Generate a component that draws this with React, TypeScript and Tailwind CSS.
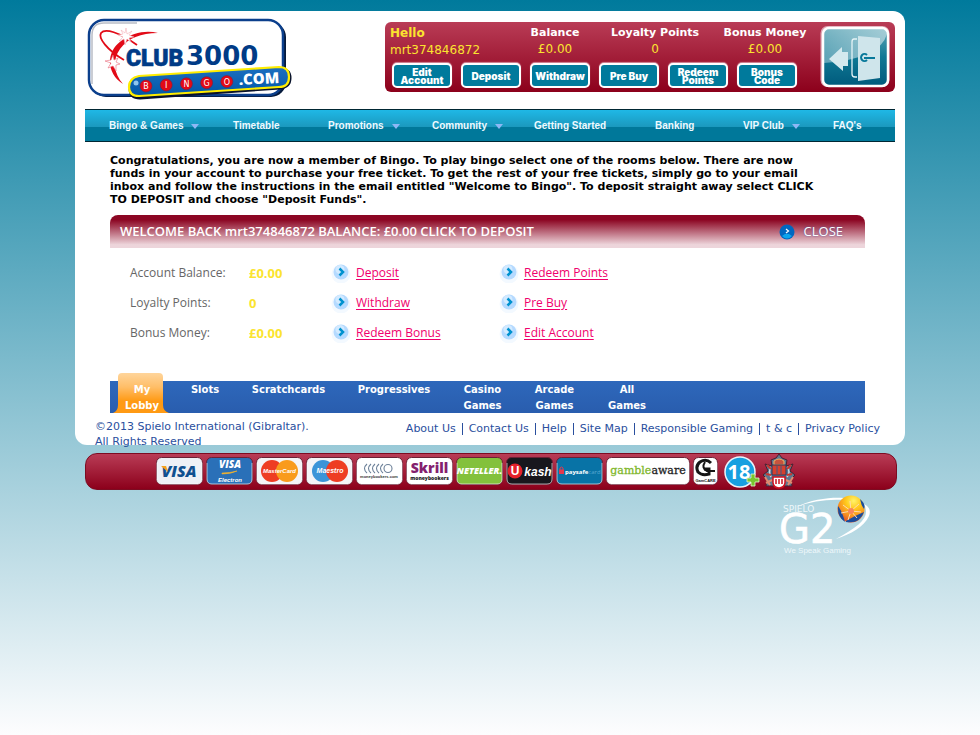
import React from "react";

const accountButtons = ["Edit Account", "Deposit", "Withdraw", "Pre Buy", "Redeem Points", "Bonus Code"];

const menu = [
  { label: "Bingo & Games", sub: true },
  { label: "Timetable", sub: false },
  { label: "Promotions", sub: true },
  { label: "Community", sub: true },
  { label: "Getting Started", sub: false },
  { label: "Banking", sub: false },
  { label: "VIP Club", sub: true },
  { label: "FAQ's", sub: false },
];

const summary = [
  { label: "Account Balance:", value: "£0.00", left: "Deposit", right: "Redeem Points" },
  { label: "Loyalty Points:", value: "0", left: "Withdraw", right: "Pre Buy" },
  { label: "Bonus Money:", value: "£0.00", left: "Redeem Bonus", right: "Edit Account" },
];

const tabs = [
  ["My", "Lobby"],
  ["Slots"],
  ["Scratchcards"],
  ["Progressives"],
  ["Casino", "Games"],
  ["Arcade", "Games"],
  ["All", "Games"],
];

const footerLinks = ["About Us", "Contact Us", "Help", "Site Map", "Responsible Gaming", "t & c", "Privacy Policy"];

function ClubLogo() {
  return (
    <svg width="206" height="84" viewBox="0 0 206 84" role="img" aria-label="Club 3000 Bingo.com">
      <defs>
        <linearGradient id="plate" x1="0" y1="0" x2="0" y2="1">
          <stop offset="0" stopColor="#1c6fc0" />
          <stop offset="1" stopColor="#0057a8" />
        </linearGradient>
      </defs>
      <rect x="4" y="4" width="195" height="75" rx="15" fill="#061a3c" />
      <rect x="2" y="2" width="194" height="75" rx="15" fill="#fff" stroke="#0b3f8c" strokeWidth="2.5" />
      <path d="M5 66V17Q5 5 17 5H50" fill="none" stroke="#b9bdc6" strokeWidth="1.5" />
      <path d="M36 66C19 55 19 34 34 23C46 14 60 12 71 15C54 15 41 20 33 31C25 42 27 56 36 66Z" fill="#e20a17" />
      <path d="M37 42C20 32 11 20 14 15C18 10 32 14 50 27" fill="none" stroke="#e20a17" strokeWidth="1.8" />
      <path d="M39 10L40 16L45 13L42 17L47 19L42 20L44 24L40 21L38 27L37 21L32 23L36 19L31 17L36 16L34 12L38 15Z" fill="#fff" stroke="#f3a5ae" strokeWidth=".5" />
      <path d="M26 37L27 42L31 40L29 44L33 46L29 47L29 53L26 48L21 50L24 45L18 43L24 42Z" fill="#fff" stroke="#e9697a" strokeWidth=".6" />
      <text x="39" y="48" fontFamily="Roboto,sans-serif" fontSize="23" fontWeight="900" fill="#003b86" stroke="#003b86" strokeWidth=".6">CLUB</text>
      <text x="99" y="47" fontFamily="'DejaVu Sans',sans-serif" fontSize="26" fontWeight="700" fill="#003b86">3000</text>
      <path d="M52 60L193 51Q203 51 203 60T193 70L53 80Q43 80 43 70T52 60Z" fill="#08122c" stroke="#08122c" strokeWidth="3" />
      <path d="M52 58L192 49Q202 49 202 59T192 69L52 78Q42 78 42 69T52 58Z" fill="url(#plate)" stroke="#ffed00" strokeWidth="2.2" />
      <circle cx="49" cy="65" r="2.500" fill="#8ec5ee" />
      {["B", "I", "N", "G", "O"].map((c, i) => (
        <g key={c}>
          <circle cx={59 + i * 20.2} cy={68 - i * 1.1} r="6" fill="#e20a17" stroke="#7d1c3b" strokeWidth=".6" />
          <text x={59 + i * 20.2} y={71 - i * 1.1} textAnchor="middle" fontFamily="'DejaVu Sans',sans-serif" fontSize="8" fill="#fff">{c}</text>
        </g>
      ))}
      <text x="152" y="67" transform="rotate(-3 152 67)" fontFamily="'Open Sans',sans-serif" fontSize="15" fontWeight="800" fill="#fff">.COM</text>
    </svg>
  );
}

function DoorIcon() {
  return (
    <svg width="70" height="64" viewBox="0 0 70 64" aria-hidden="true">
      <defs>
        <linearGradient id="door" x1="0" y1="0" x2="0" y2="1">
          <stop offset="0" stopColor="#5ba5b6" />
          <stop offset=".5" stopColor="#0f7894" />
          <stop offset="1" stopColor="#005a7c" />
        </linearGradient>
        <linearGradient id="shine" x1="0" y1="0" x2="1" y2=".6">
          <stop offset="0" stopColor="#fff" stopOpacity=".2" />
          <stop offset="1" stopColor="#fff" stopOpacity=".55" />
        </linearGradient>
      </defs>
      <rect x=".5" y="1" width="69" height="61" rx="7" fill="#dfa4b2" />
      <rect x="3" y="3" width="65" height="58" rx="6" fill="url(#door)" stroke="#fff" strokeWidth="2.5" />
      <path d="M4 38V9Q4 4 9 4H62Q67 4 67 9Q60 34 4 38Z" fill="url(#shine)" />
      <path d="M9 34L22 22V27H28V41H23V46Z" fill="#d4e9ee" />
      <path d="M37 14H34Q32 14 32 17V49Q32 52 35 52H37" fill="none" stroke="#e5f3f6" strokeWidth="1.3" />
      <path d="M38 11L60 13V53L38 56Z" fill="#cfe5eb" />
      <path d="M47 30A3.500 3.500 0 1 0 47 35" fill="none" stroke="#08789a" strokeWidth="2" />
      <path d="M44 33H55" stroke="#08789a" strokeWidth="2" />
    </svg>
  );
}

function ArrowBullet() {
  return (
    <svg width="20" height="20" viewBox="0 0 20 20" aria-hidden="true" className="shrink-0">
      <circle cx="10" cy="11" r="9.5" fill="#f3f9ff" />
      <circle cx="10" cy="9" r="7.5" fill="#b5daff" />
      <circle cx="9" cy="6.500" r="4.500" fill="#d3eaff" />
      <path d="M8.500 5.500L12 9L8.500 12.500" fill="none" stroke="#0092cf" strokeWidth="2.500" />
    </svg>
  );
}

function CloseBullet() {
  return (
    <svg width="16" height="16" viewBox="0 0 16 16" aria-hidden="true">
      <circle cx="8" cy="8" r="7.500" fill="#0067c0" />
      <path d="M3 12Q8 17 13 12L10 10H6Z" fill="#0aa5ee" />
      <path d="M7 5L9.500 7L7 9" fill="none" stroke="#fff" strokeWidth="1.200" />
    </svg>
  );
}

function LobbyTab() {
  return (
    <svg width="56" height="40" viewBox="0 0 56 40" aria-hidden="true" className="absolute bottom-px left-[3px]">
      <defs>
        <linearGradient id="tab" x1="0" y1="0" x2="0" y2="1">
          <stop offset="0" stopColor="#ffd59b" />
          <stop offset=".35" stopColor="#ffbe68" />
          <stop offset=".7" stopColor="#ff9a14" />
          <stop offset="1" stopColor="#ff9a14" />
        </linearGradient>
      </defs>
      <path d="M0 40Q5 38 5 32V4Q5 0 9 0H46Q50 0 50 4V32Q50 38 56 40Z" fill="url(#tab)" />
    </svg>
  );
}

function Card({ name, width = 47, fill = "#fff", children }: { name: string; width?: number; fill?: string; children: React.ReactNode }) {
  return (
    <svg width={width} height="28" viewBox={`0 0 ${width} 28`} role="img" aria-label={name}>
      <rect x=".5" y=".5" width={width - 1} height="27" rx="5" fill={fill} stroke="#6c2035" strokeWidth="1" />
      <path d={`M1 6V22Q1 27 6 27H${width - 6}Q${width - 1} 27 ${width - 1} 22V6`} fill="none" stroke="#fff" strokeOpacity=".6" />
      {children}
    </svg>
  );
}

function PaymentCards() {
  const sans = "'Liberation Sans',sans-serif";
  const open = "'Open Sans',sans-serif";
  return (
    <div className="flex items-center gap-[3px] pb-[2px]">
      <Card name="Visa" fill="#eef1f6">
        <text x="23" y="20" textAnchor="middle" fontFamily={open} fontSize="16" fontWeight="800" fontStyle="italic" fill="#10508f">VISA</text>
        <path d="M5 9H10L12 15Z" fill="#f6a11b" />
      </Card>
      <Card name="Visa Electron" fill="#2a70b8">
        <text x="24" y="11" textAnchor="middle" fontFamily={open} fontSize="10" fontWeight="800" fontStyle="italic" fill="#fff">VISA</text>
        <path d="M16 16Q24 16 31 14Q25 17 16 17Z" fill="#f6b42b" stroke="#f6b42b" strokeWidth=".6" />
        <text x="24" y="25" textAnchor="middle" fontFamily={sans} fontSize="6" fontWeight="700" fontStyle="italic" fill="#fff">Electron</text>
      </Card>
      <Card name="MasterCard" fill="#f4f4f7">
        <circle cx="16" cy="14" r="11" fill="#ee3d23" />
        <circle cx="31" cy="14" r="11" fill="#f99b1c" />
        <text x="23.500" y="16" textAnchor="middle" fontFamily={sans} fontSize="6" fontWeight="700" fontStyle="italic" fill="#fff">MasterCard</text>
      </Card>
      <Card name="Maestro" fill="#f4f4f7">
        <circle cx="17" cy="14" r="11" fill="#3b94d8" />
        <circle cx="31" cy="14" r="11" fill="#ee3d23" />
        <text x="24" y="16" textAnchor="middle" fontFamily={sans} fontSize="7" fontWeight="700" fontStyle="italic" fill="#fff">Maestro</text>
      </Card>
      <Card name="Moneybookers">
        {[8, 12, 16, 20, 24].map((x) => (
          <path key={x} d={`M${x + 3} 7Q${x - 2} 11.500 ${x + 3} 16`} fill="none" stroke="#6d8199" strokeWidth="1.100" />
        ))}
        <circle cx="32" cy="11.500" r="4" fill="#fff" stroke="#6d8199" strokeWidth="1.100" />
        <text x="23" y="21" textAnchor="middle" fontFamily={sans} fontSize="4" fontWeight="700" fill="#333">moneybookers.com</text>
      </Card>
      <Card name="Skrill Moneybookers">
        <text x="23.500" y="16" textAnchor="middle" fontFamily={open} fontSize="14" fontWeight="800" fill="#84206e">Skrill</text>
        <text x="23.500" y="23" textAnchor="middle" fontFamily={open} fontSize="5" fontWeight="800" fill="#222">moneybookers</text>
      </Card>
      <Card name="Neteller" fill="#83c13c">
        <text x="23.500" y="17" textAnchor="middle" fontFamily={open} fontSize="9" fontWeight="800" fontStyle="italic" fill="#fff">NETELLER.</text>
      </Card>
      <Card name="Ukash" fill="#18171d">
        <circle cx="9" cy="14" r="7.500" fill="#e3212b" />
        <text x="9" y="18" textAnchor="middle" fontFamily={sans} fontSize="12" fontWeight="700" fill="#fff">U</text>
        <text x="32" y="19" textAnchor="middle" fontFamily={sans} fontSize="12" fontWeight="700" fontStyle="italic" fill="#fff">kash</text>
      </Card>
      <Card name="Paysafecard" fill="#0873a6">
        <path d="M4 13V11Q5.500 9 7 11V13" fill="none" stroke="#e5384d" />
        <rect x="3" y="12.500" width="5" height="4.500" fill="#e5384d" />
        <text x="9" y="17" fontFamily={open} fontSize="6" fontWeight="700" fill="#fff">paysafe<tspan fill="#59a8d0" fontWeight="400">card</tspan></text>
      </Card>
      <Card name="GambleAware" width={84}>
        <text x="42" y="17" textAnchor="middle" fontFamily="'DejaVu Serif',serif" fontSize="11" fill="#7fb72c" stroke="#7fb72c" strokeWidth=".3">gamble<tspan fill="#222" stroke="#222">aware</tspan></text>
      </Card>
      <Card name="GamCare" width={25}>
        <path d="M18 6Q13 1 7 5Q2 9 5 15Q9 19 16 17V12H11" fill="none" stroke="#161616" strokeWidth="3" />
        <path d="M12 5Q8 11 14 14H22" fill="none" stroke="#161616" strokeWidth="2" />
        <text x="12.500" y="25" textAnchor="middle" fontFamily={sans} fontSize="4" fontWeight="700" fill="#111">GamCARE</text>
      </Card>
      <svg width="38" height="34" viewBox="0 0 38 34" role="img" aria-label="18+" className="ml-[2px]">
        <circle cx="17" cy="18" r="15" fill="#179fe0" stroke="#e9f6fc" strokeWidth="1.500" />
        <text x="16" y="25" textAnchor="middle" fontFamily={open} fontSize="20" fontWeight="700" fill="#fff">18</text>
        <path d="M28 20H32V24H36V28H32V32H28V28H24V24H28Z" fill="#78c52d" stroke="#e5f5d6" strokeWidth=".8" />
      </svg>
      <svg width="34" height="36" viewBox="0 0 34 36" role="img" aria-label="Government of Gibraltar crest" className="-ml-[2px]">
        <path d="M17 1L20 5L25 7L24 13L31 11L28 18L33 22L29 26L30 33H4L5 26L1 22L6 18L3 11L10 13L9 7L14 5Z" fill="#5d7890" stroke="#4a2030" strokeWidth="1" />
        <path d="M12 8Q17 4 22 8V12H12Z" fill="#c6533e" stroke="#f0b260" />
        <path d="M9 14Q6 19 9 24M25 14Q29 19 25 24" fill="none" stroke="#c9d9e2" strokeWidth="1.500" />
        <path d="M5 12L9 16M29 12L25 16M4 21L9 22M30 21L25 22" stroke="#c8372f" strokeWidth="2" />
        <path d="M10 12H24V22H10Z" fill="#d5402f" stroke="#293b60" />
        <path d="M15 13V21M19 13V21" stroke="#3c5b88" />
        <path d="M3 24L8 32M31 24L26 32M4 30L10 27M30 30L24 27" stroke="#e08a70" strokeWidth="2" />
        <path d="M11 24H23V30Q22 35 17 35Q12 35 11 30Z" fill="#fff" stroke="#cf111f" strokeWidth="1.500" />
        <path d="M14 26V31M17 26V31M20 26V31" stroke="#cf111f" strokeWidth="1.500" />
      </svg>
    </div>
  );
}

function SpieloLogo() {
  return (
    <svg width="94" height="62" viewBox="0 0 94 62" role="img" aria-label="Spielo G2 We Speak Gaming">
      <defs>
        <radialGradient id="ball" cx=".6" cy=".2" r=".85">
          <stop offset="0" stopColor="#fff36b" />
          <stop offset=".35" stopColor="#ffc81b" />
          <stop offset=".7" stopColor="#f58a22" />
          <stop offset="1" stopColor="#d9452a" />
        </radialGradient>
      </defs>
      <path d="M16 13C32 5 52 3 64 4V6C48 5 32 7 16 13Z" fill="#fff" />
      <path d="M84 10Q92 14 89 22C84 33 71 40 56 45C76 34 86 26 86 18Q86 14 84 10Z" fill="#fff" />
      <text x="3" y="18" fontFamily="'DejaVu Sans',sans-serif" fontSize="9" fill="#eef7fa">SPIELO</text>
      <text x="-1" y="49" fontFamily="'DejaVu Sans',sans-serif" fontSize="40" fill="#fff" stroke="#fff" strokeWidth=".6">G2</text>
      <text x="4" y="59" fontFamily="'Liberation Sans',sans-serif" fontSize="8" fill="#eef7fa">We Speak Gaming</text>
      <circle cx="71" cy="15" r="13.500" fill="url(#ball)" />
      <path d="M58 12Q62 17 65 28Q57 23 58 12ZM66 27Q74 22 84 18Q80 30 66 28ZM80 5Q86 10 84 15Q81 11 80 5Z" fill="#1b4c9c" />
      <path d="M71 17L63 11M71 17L70 7M71 17L79 10M71 17L81 18M71 17L77 24M71 17L68 26M71 17L61 19" stroke="#ffd9b0" strokeWidth="1" />
      <circle cx="71" cy="17" r="3" fill="#f7855a" />
    </svg>
  );
}

function Stat({ label, value }: { label: string; value: string }) {
  return (
    <div className="text-center">
      <dt className="text-[11px] leading-4 font-bold text-white">{label}</dt>
      <dd className="text-xs leading-4 text-[#fbe42f]">{value}</dd>
    </div>
  );
}

function BulletLink({ children }: { children: React.ReactNode }) {
  return (
    <span className="flex items-center gap-[5px]">
      <ArrowBullet />
      <a href="#" className="text-[#f0006c] underline underline-offset-2">{children}</a>
    </span>
  );
}

export default function App() {
  return (
    <div className="min-h-screen bg-[linear-gradient(#007a9c,#fdfdfe)] pt-[11px] font-['DejaVu_Sans',sans-serif]">
      <main className="mx-auto max-w-[830px] rounded-xl bg-white">
        <header className="flex items-start justify-between px-[10px] pt-[7px] pb-[7px]">
          <a href="#" className="ml-[2px] block">
            <ClubLogo />
          </a>
          <section className="mt-1 flex h-[70px] w-[510px] rounded-md bg-[linear-gradient(#b93c56,#8c001b)] pt-[3px] pr-[5px] pl-[5px]">
            <div className="w-[430px]">
              <dl className="grid grid-cols-[120px_90px_110px_110px]">
                <div>
                  <dt className="text-xs leading-4 font-bold text-[#fbe42f]">Hello</dt>
                  <dd className="text-xs leading-[18px] text-[#fbe42f]">mrt374846872</dd>
                </div>
                <Stat label="Balance" value="£0.00" />
                <Stat label="Loyalty Points" value="0" />
                <Stat label="Bonus Money" value="£0.00" />
              </dl>
              <div className="mt-1 ml-[2px] flex gap-[9px]">
                {accountButtons.map((label) => (
                  <button
                    key={label}
                    type="button"
                    className="flex h-[25px] w-[60px] items-center justify-center rounded-[5px] border-2 border-white bg-[#007a9c] px-[2px] text-center font-[Inter,sans-serif] text-[10px] leading-2 font-black text-white shadow-[0_-1px_1px_#d38d9d]"
                  >
                    {label}
                  </button>
                ))}
              </div>
            </div>
            <button type="button" aria-label="Log out" className="self-start">
              <DoorIcon />
            </button>
          </section>
        </header>

        <nav className="mx-[10px] border-y border-[#002733] bg-[linear-gradient(#1fb8e6,#1b98bd_55%,#00789a_55%)]">
          <ul className="grid h-[31px] grid-cols-[124px_95px_104px_102px_121px_88px_90px_1fr] items-center pl-6 font-['Liberation_Sans',sans-serif] text-[10px] leading-3 font-bold text-[#effaff]">
            {menu.map((item) => (
              <li key={item.label}>
                <a href="#" className="flex items-center gap-2 whitespace-nowrap">
                  {item.label}
                  {item.sub && (
                    <svg width="8" height="6" viewBox="0 0 8 6" aria-hidden="true" className="mt-[2px]">
                      <path d="M0 0H8L4 5Z" fill="#8db8f5" />
                    </svg>
                  )}
                </a>
              </li>
            ))}
          </ul>
        </nav>

        <div className="pt-3 pr-10 pl-[35px]">
          <p className="text-[11px] leading-[13px] font-bold text-black">
            Congratulations, you are now a member of Bingo. To play bingo select one of the rooms below. There are now
            <br />
            funds in your account to purchase your free ticket. To get the rest of your free tickets, simply go to your email
            <br />
            inbox and follow the instructions in the email entitled "Welcome to Bingo". To deposit straight away select CLICK
            <br />
            TO DEPOSIT and choose "Deposit Funds".
          </p>

          <div className="mt-[9px] flex h-[33px] items-center justify-between rounded-t-lg bg-[linear-gradient(#8c0623_15%,#edd5db_90%)] pr-[22px] pl-[10px] font-['Open_Sans',sans-serif] text-white">
            <h2 className="text-[13px] font-semibold">WELCOME BACK mrt374846872 BALANCE: £0.00 CLICK TO DEPOSIT</h2>
            <button type="button" className="flex items-center gap-[9px] text-[13px] text-shadow-[0_0_2px_#5150a0]">
              <CloseBullet />
              CLOSE
            </button>
          </div>

          <table className="mt-[10px] ml-5 table-fixed border-collapse font-['Open_Sans',sans-serif] text-xs leading-5">
            <tbody>
              {summary.map((row) => (
                <tr key={row.label} className="h-[30px]">
                  <th scope="row" className="w-[119px] p-0 text-left font-normal text-[#666]">{row.label}</th>
                  <td className="w-[82px] p-0 text-[13px] font-bold text-[#fbe42f]">{row.value}</td>
                  <td className="w-[168px] p-0"><BulletLink>{row.left}</BulletLink></td>
                  <td className="w-[168px] p-0"><BulletLink>{row.right}</BulletLink></td>
                </tr>
              ))}
            </tbody>
          </table>

          <nav className="mt-[33px] bg-[linear-gradient(#2e68bb,#295dae)]">
            <ul className="grid h-8 grid-cols-[64px_62px_105px_106px_71px_73px_72px] pt-px text-center text-[10px] leading-4 font-bold text-white">
              {tabs.map((tab, i) => (
                <li key={tab.join(" ")} className="relative">
                  {i === 0 && <LobbyTab />}
                  <a href="#" className="relative block">
                    {tab.map((line) => (
                      <span key={line} className="block">{line}</span>
                    ))}
                  </a>
                </li>
              ))}
            </ul>
          </nav>
        </div>

        <footer className="flex h-8 items-start justify-between pt-[6px] pr-[25px] pl-5 text-[#2a4f9e]">
          <p className="text-[11px] leading-[15px]">
            ©2013 Spielo International (Gibraltar).
            <br />
            All Rights Reserved
          </p>
          <ul className="mt-1 flex text-[11px] leading-3">
            {footerLinks.map((label) => (
              <li key={label} className="border-l border-[#2a4f9e] px-[6px] first:border-l-0 last:pr-0">
                <a href="#">{label}</a>
              </li>
            ))}
          </ul>
        </footer>
      </main>

      <div className="mx-auto mt-2 max-w-[830px] pr-2 pl-[10px]">
        <section className="flex h-[37px] items-center rounded-xl border border-[#7c0c22] bg-[linear-gradient(#b93c56,#8c001b)] pl-[70px]">
          <PaymentCards />
        </section>
        <div className="mt-1 flex justify-end pr-[23px]">
          <SpieloLogo />
        </div>
      </div>
    </div>
  );
}
